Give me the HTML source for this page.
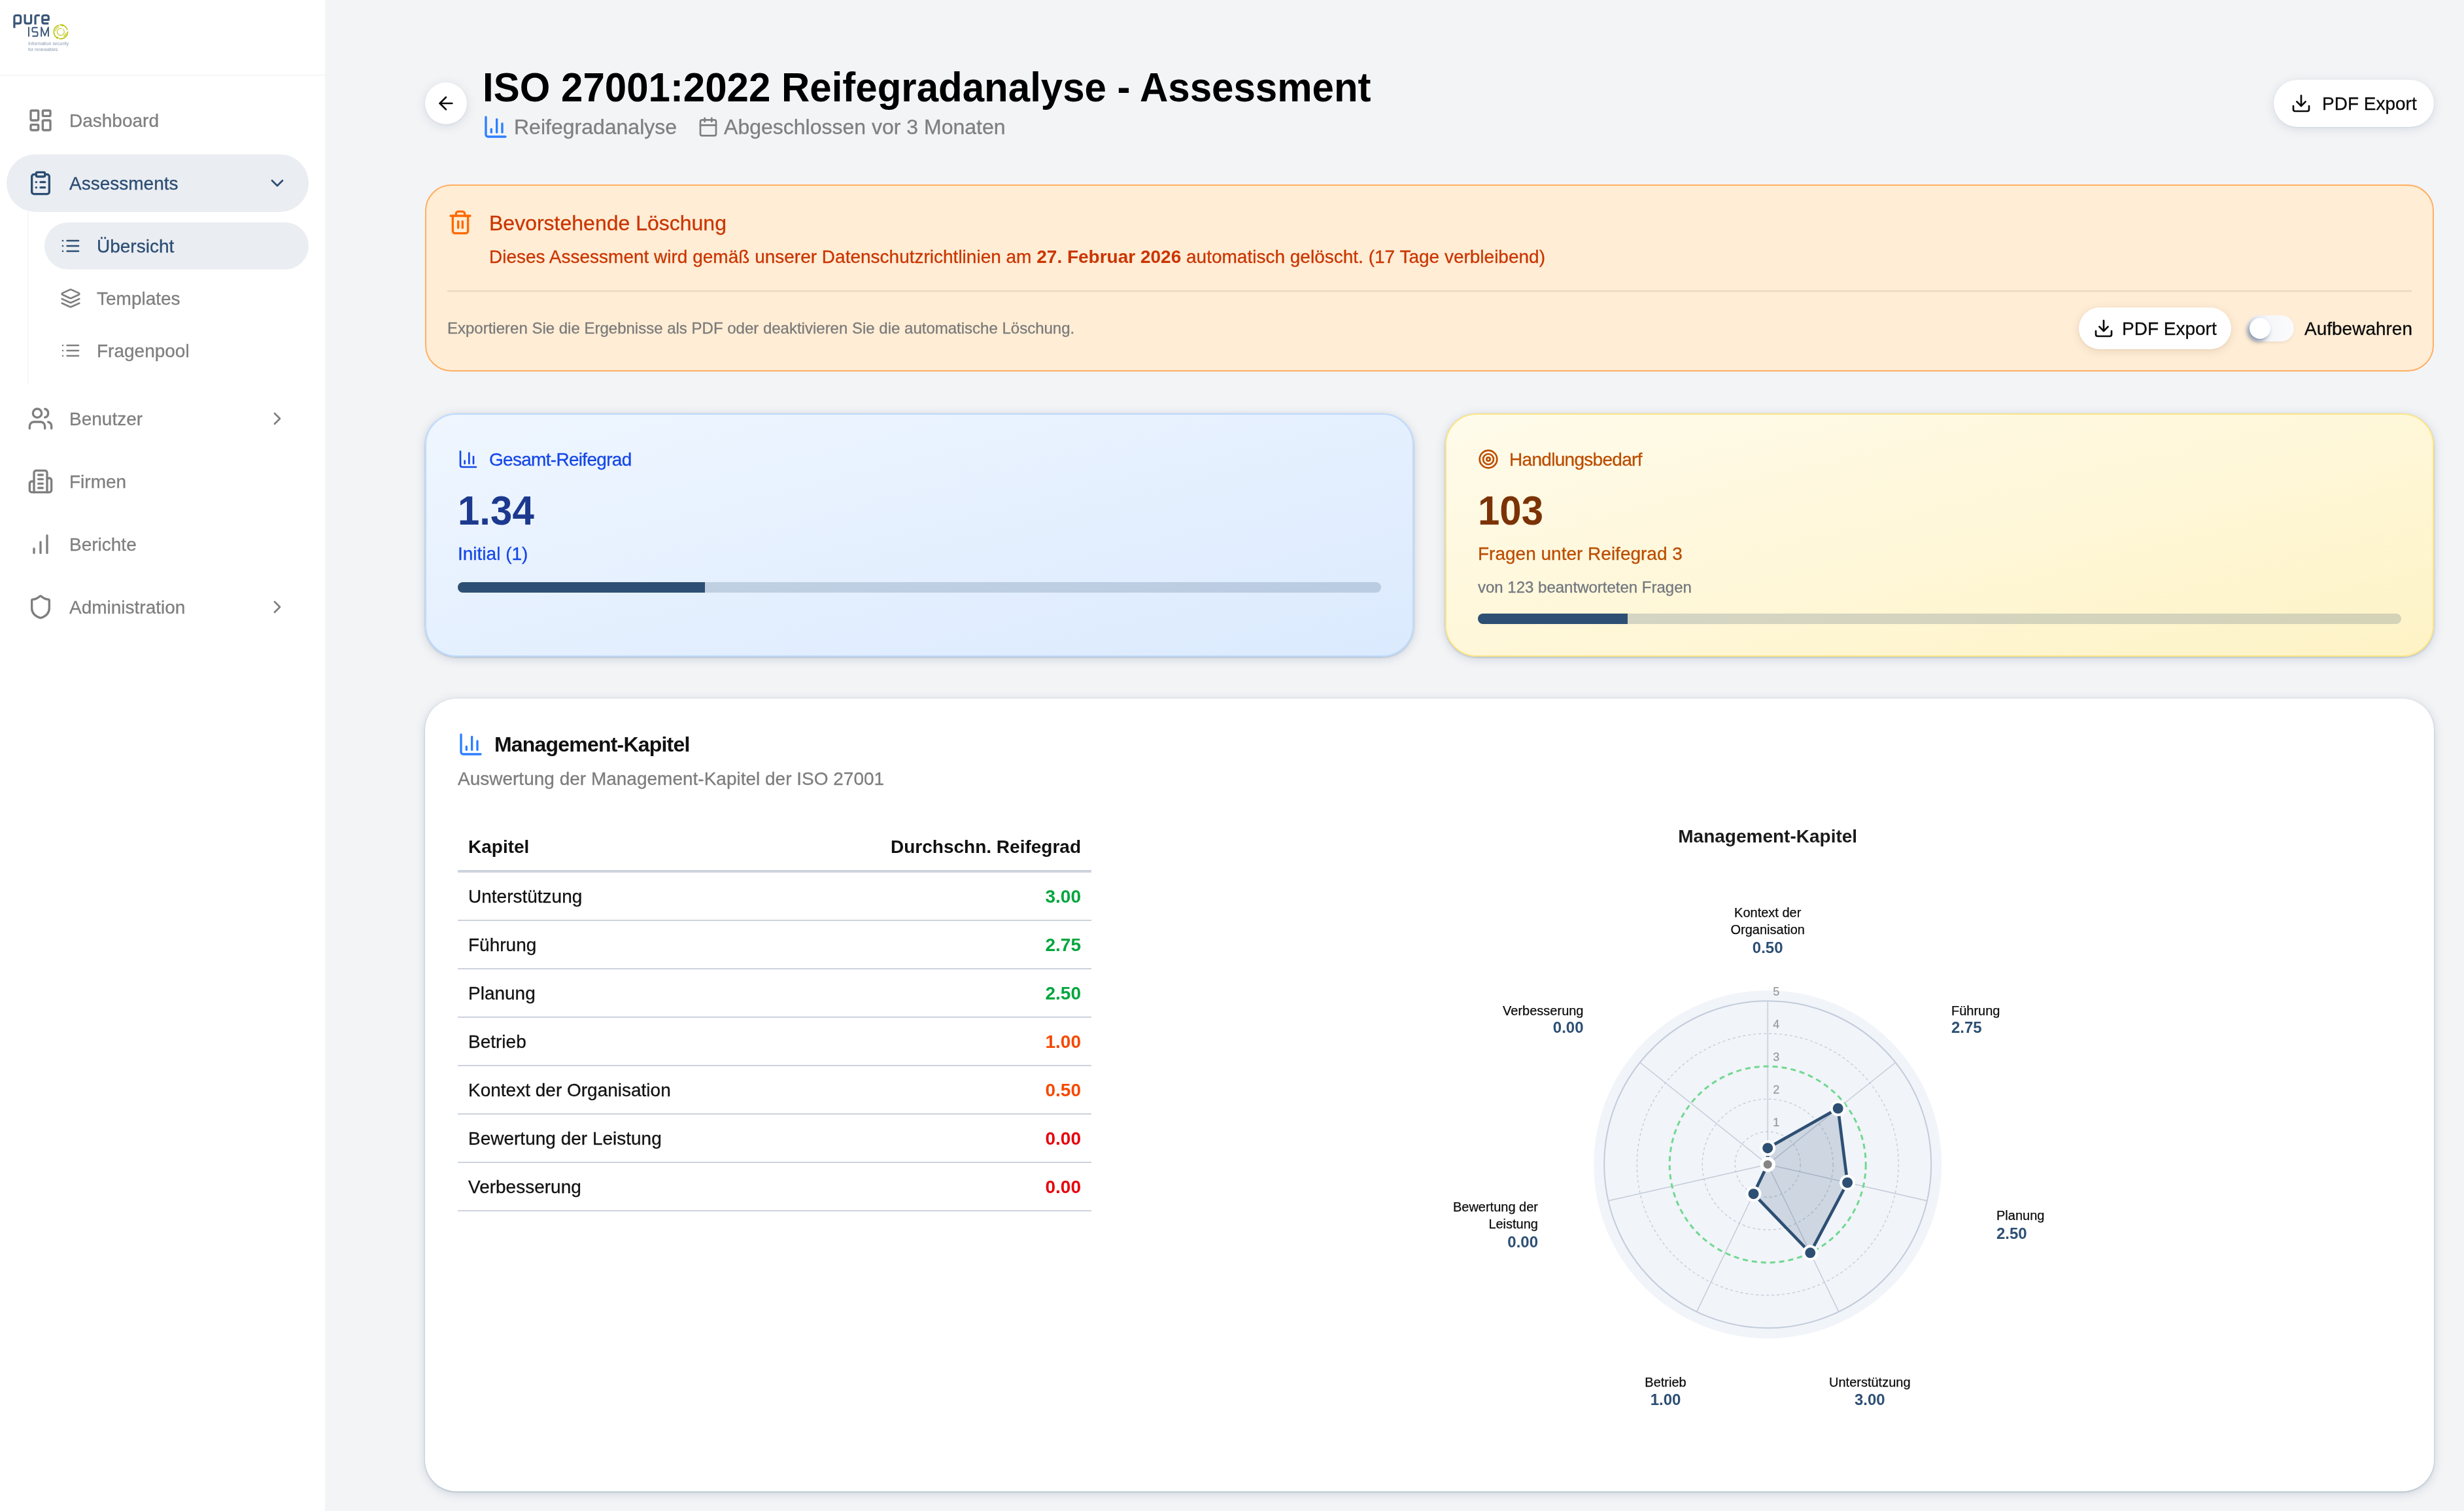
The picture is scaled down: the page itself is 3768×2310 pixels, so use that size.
<!DOCTYPE html>
<html lang="de">
<head>
<meta charset="utf-8">
<title>ISO 27001:2022 Reifegradanalyse - Assessment</title>
<style>
*{box-sizing:border-box;margin:0;padding:0}
html,body{width:3768px;height:2310px;overflow:hidden}
body{-webkit-text-stroke:0.3px;font-family:"Liberation Sans",sans-serif;background:#f3f4f6;color:#0a0a0a;position:relative;-webkit-font-smoothing:antialiased}
#root{position:absolute;left:0;top:0;width:3768px;height:2310px;will-change:transform;transform:translateZ(0)}
svg{display:block;flex:none}
#title,.num,b,#mg .hd,#tb .r.h,#rad text[font-weight]{-webkit-text-stroke:0}
.ic{fill:none;stroke:currentColor;stroke-width:2;stroke-linecap:round;stroke-linejoin:round}

/* ---------- sidebar ---------- */
#sb{position:absolute;left:0;top:0;width:497px;height:2310px;background:#fff}
#sbhead{position:absolute;left:0;top:0;width:497px;height:116px;border-bottom:2px solid #f7f7f8}
#logo{position:absolute;left:0;top:0}
.nav{position:absolute;left:10px;width:462px;height:88px;border-radius:44px;display:flex;align-items:center;padding:0 32px;font-size:28px;line-height:40px;color:#7f7f7f}
.nav span,.sub span,.pill span{position:relative;top:1px}
.nav svg.i40{width:40px;height:40px;margin-right:24px}
.nav .chev{width:32px;height:32px;margin-left:auto}
.nav.act{background:#eaedf1;color:#2b4d74}
.sub{position:absolute;left:68px;width:404px;height:72px;border-radius:36px;display:flex;align-items:center;padding:0 24px;font-size:28px;line-height:40px;color:#7f7f7f}
.sub svg{width:32px;height:32px;margin-right:24px}
.sub.act{background:#eaedf1;color:#2b4d74}
#subline{position:absolute;left:42px;top:324px;width:2px;height:264px;background:#f6f7f8}

/* ---------- main ---------- */
#backbtn{position:absolute;left:650px;top:126px;width:64px;height:64px;border-radius:32px;background:#fff;box-shadow:0 3px 16px rgba(45,79,115,.15),0 1px 3px rgba(45,79,115,.08);display:flex;align-items:center;justify-content:center;color:#0a0a0a}
#backbtn svg{width:32px;height:32px}
#title{transform:scaleY(1.045);transform-origin:0 56px;position:absolute;left:738px;top:99px;font-size:60px;line-height:72px;font-weight:700;color:#000;white-space:nowrap;letter-spacing:0}
#subtitle{position:absolute;left:738px;top:170px;height:48px;display:flex;align-items:center;font-size:32px;line-height:48px;color:#7f7f7f;white-space:nowrap}
.pill{position:absolute;background:#fff;border-radius:999px;display:flex;align-items:center;font-size:28px;line-height:40px;color:#0a0a0a;white-space:nowrap;box-shadow:0 3px 16px rgba(45,79,115,.15),0 1px 3px rgba(45,79,115,.08)}
.pill svg{width:32px;height:32px}

/* ---------- alert ---------- */
#alert{position:absolute;left:650px;top:282px;width:3072px;height:286px;border:2px solid #ffaf62;border-radius:40px;background:#ffedd5}
#alert .trash{position:absolute;left:32px;top:36px;width:40px;height:40px;color:#ff6900}
#alert .t1{position:absolute;left:96px;top:33px;font-size:32px;line-height:48px;color:#ca3500;white-space:nowrap}
#alert .t2{position:absolute;left:96px;top:89px;font-size:28px;line-height:40px;color:#ca3500;white-space:nowrap}
#alert .t2 b{font-weight:700}
#alert .div{position:absolute;left:32px;right:32px;top:160px;height:2px;background:#e9d6c0}
#alert .t3{position:absolute;left:32px;top:202px;font-size:24px;line-height:32px;color:#7a7a7a;white-space:nowrap}
#alert .pill{left:2527px;top:186px;height:64px;padding:0 22px;box-shadow:0 3px 14px rgba(115,79,45,.14),0 1px 3px rgba(115,79,45,.08)}
#tog{position:absolute;left:2784px;top:198px;width:72px;height:40px;border-radius:20px;background:linear-gradient(90deg,#e3e7ee 0%,#f6f7fa 45%,#fbfbfd 100%);box-shadow:0 2px 4px rgba(30,41,59,.08)}
#tog i{position:absolute;left:4px;top:4px;width:32px;height:32px;border-radius:16px;background:#fff;box-shadow:-3px 4px 7px rgba(51,75,110,.55)}
#alert .t4{position:absolute;left:2872px;top:199px;font-size:28px;line-height:40px;color:#0a0a0a;white-space:nowrap}

/* ---------- stat cards ---------- */
.card{position:absolute;top:632px;width:1512px;height:372px;border-radius:48px;border:2px solid;box-shadow:0 3px 16px rgba(45,79,115,.20),0 1px 3px rgba(45,79,115,.30)}
#c1{left:650px;border-color:#bedbff;background:linear-gradient(to bottom right,#eff6ff 0%,#dbeafe 100%)}
#c2{left:2210px;border-color:#fee685;background:linear-gradient(to bottom right,#fffbeb 0%,#fef3c6 100%)}
.card .hd{position:absolute;left:48px;top:48px;height:40px;display:flex;align-items:center;font-size:28px;line-height:40px;white-space:nowrap;letter-spacing:-0.7px}
.card .hd svg{width:32px;height:32px;margin-right:16px}
.card .hd span{position:relative;top:1px}
.card .num{transform:scaleY(1.045);transform-origin:0 56px;position:absolute;left:48px;top:112px;font-size:60px;line-height:72px;font-weight:700;white-space:nowrap}
.card .l1{position:absolute;left:48px;top:193px;font-size:28px;line-height:40px;white-space:nowrap}
.card .l2{position:absolute;left:48px;top:248px;font-size:24px;line-height:32px;color:#72767e;white-space:nowrap}
.bar{position:absolute;left:48px;width:1412px;height:16px;border-radius:8px;background:rgba(45,79,115,.2);overflow:hidden}
.bar i{display:block;height:16px;background:#2d4f73}

/* ---------- management card ---------- */
#mg{position:absolute;left:650px;top:1068px;width:3072px;height:1212px;border-radius:48px;background:#fff;box-shadow:0 3px 16px rgba(45,79,115,.20),0 1px 3px rgba(45,79,115,.30)}
#mg .hd{position:absolute;left:50px;top:50px;height:40px;display:flex;align-items:center;font-size:32px;line-height:40px;font-weight:700;letter-spacing:-0.8px;color:#111;white-space:nowrap}
#mg .hd svg{width:40px;height:40px;margin-right:16px;color:#2b7fff}
#mg .ds{position:absolute;left:50px;top:103px;font-size:28px;line-height:40px;color:#7d7d7d;white-space:nowrap}
#tb{position:absolute;left:50px;top:190px;width:969px;font-size:28px;line-height:40px;color:#111}
#tb .r span,#tb .r b{position:relative;top:1px}
#tb .r{height:74px;border-bottom:2px solid #cdd3dd;display:flex;align-items:center;justify-content:space-between;padding:0 16px;white-space:nowrap}
#tb .r.h{height:76px;border-bottom:4px solid #cdd3dd;font-weight:700}
#tb b{font-weight:700}
.g{color:#00a63e}.o{color:#f54900}.rd{color:#e7000b}
#rad{position:absolute;left:1400px;top:150px}
#rad text{font-family:"Liberation Sans",sans-serif}
</style>
</head>
<body>
<div id="root">

<!-- ================= SIDEBAR ================= -->
<div id="sb">
  <div id="sbhead">
    <svg id="logo" width="130" height="100" viewBox="0 0 130 100">
      <g fill="none" stroke="#3a5679" stroke-width="3.2" stroke-linejoin="round">
        <path d="M21.900 42.800V26.500Q21.900 23.500 24.900 23.500H28.700Q31.700 23.500 31.700 26.500V32.900Q31.700 35.900 28.700 35.900H21.900"/>
        <path d="M38.100 21.900V32.900Q38.100 35.900 41.100 35.900H44.600Q47.600 35.900 47.600 32.900V21.900"/>
        <path d="M54 37.500V26.500Q54 23.500 57 23.500H60.800"/>
        <path d="M74.300 35.900H67.800Q64.800 35.900 64.800 32.900V26.500Q64.800 23.500 67.800 23.500H71.300Q74.300 23.500 74.300 26.500V30.300H64.800"/>
      </g>
      <g fill="none" stroke="#3a5679" stroke-width="1.900" stroke-linejoin="round">
        <path d="M44 41.300V56.100"/>
        <path d="M57.500 42.200H50.900Q49.400 42.200 49.400 43.700V47.200Q49.400 48.700 50.900 48.700H56Q57.500 48.700 57.500 50.200V53.700Q57.500 55.200 56 55.200H49.400"/>
        <path d="M63.200 56.100V41.800L68.550 54.500L73.900 41.800V56.100"/>
      </g>
      <g fill="none" stroke="#bcc414" stroke-linecap="round">
        <circle cx="92.900" cy="48.700" r="10.600" stroke-width="1.700" stroke-dasharray="19 3 24 2.500 14 4"/>
        <path d="M84.800 47.500A8.200 8.200 0 0 1 90 41" stroke-width="1.100"/>
        <path d="M101 50.500A8.200 8.200 0 0 1 97.500 55.500" stroke-width="1.100"/>
        <circle cx="92.900" cy="48.700" r="5.400" stroke-width="1.100" stroke-dasharray="26 3"/>
      </g>
      <circle cx="95.500" cy="38.600" r="1.700" fill="#bcc414"/>
      <circle cx="87.800" cy="57.800" r="1.700" fill="#bcc414"/>
      <g font-family="Liberation Sans, sans-serif" font-size="7.200" fill="#8b9ab0">
        <text x="43" y="69.400" textLength="62" lengthAdjust="spacingAndGlyphs">Information security</text>
        <text x="43" y="78.400" textLength="45.500" lengthAdjust="spacingAndGlyphs">for renewables</text>
      </g>
    </svg>
  </div>

  <div class="nav" style="top:140px">
    <svg class="ic i40" viewBox="0 0 24 24"><rect x="3" y="3" width="7" height="9" rx="1"/><rect x="14" y="3" width="7" height="5" rx="1"/><rect x="14" y="12" width="7" height="9" rx="1"/><rect x="3" y="16" width="7" height="5" rx="1"/></svg>
    <span>Dashboard</span>
  </div>
  <div class="nav act" style="top:236px">
    <svg class="ic i40" viewBox="0 0 24 24"><rect x="8" y="2" width="8" height="4" rx="1" ry="1"/><path d="M16 4h2a2 2 0 0 1 2 2v14a2 2 0 0 1-2 2H6a2 2 0 0 1-2-2V6a2 2 0 0 1 2-2h2"/><path d="M12 11h4"/><path d="M12 16h4"/><path d="M8 11h.01"/><path d="M8 16h.01"/></svg>
    <span>Assessments</span>
    <svg class="ic chev" viewBox="0 0 24 24"><path d="m6 9 6 6 6-6"/></svg>
  </div>
  <div id="subline"></div>
  <div class="sub act" style="top:340px">
    <svg class="ic" viewBox="0 0 24 24"><path d="M3 12h.01"/><path d="M3 18h.01"/><path d="M3 6h.01"/><path d="M8 12h13"/><path d="M8 18h13"/><path d="M8 6h13"/></svg>
    <span>Übersicht</span>
  </div>
  <div class="sub" style="top:420px">
    <svg class="ic" viewBox="0 0 24 24"><path d="m12.83 2.180a2 2 0 0 0-1.660 0L2.600 6.080a1 1 0 0 0 0 1.830l8.580 3.910a2 2 0 0 0 1.660 0l8.580-3.900a1 1 0 0 0 0-1.830Z"/><path d="m22 17.650-9.170 4.160a2 2 0 0 1-1.660 0L2 17.650"/><path d="m22 12.650-9.170 4.160a2 2 0 0 1-1.660 0L2 12.650"/></svg>
    <span>Templates</span>
  </div>
  <div class="sub" style="top:500px">
    <svg class="ic" viewBox="0 0 24 24"><path d="M3 12h.01"/><path d="M3 18h.01"/><path d="M3 6h.01"/><path d="M8 12h13"/><path d="M8 18h13"/><path d="M8 6h13"/></svg>
    <span>Fragenpool</span>
  </div>
  <div class="nav" style="top:596px">
    <svg class="ic i40" viewBox="0 0 24 24"><path d="M16 21v-2a4 4 0 0 0-4-4H6a4 4 0 0 0-4 4v2"/><circle cx="9" cy="7" r="4"/><path d="M22 21v-2a4 4 0 0 0-3-3.870"/><path d="M16 3.130a4 4 0 0 1 0 7.750"/></svg>
    <span>Benutzer</span>
    <svg class="ic chev" viewBox="0 0 24 24"><path d="m9 18 6-6-6-6"/></svg>
  </div>
  <div class="nav" style="top:692px">
    <svg class="ic i40" viewBox="0 0 24 24"><path d="M6 22V4a2 2 0 0 1 2-2h8a2 2 0 0 1 2 2v18Z"/><path d="M6 12H4a2 2 0 0 0-2 2v6a2 2 0 0 0 2 2h2"/><path d="M18 9h2a2 2 0 0 1 2 2v9a2 2 0 0 1-2 2h-2"/><path d="M10 6h4"/><path d="M10 10h4"/><path d="M10 14h4"/><path d="M10 18h4"/></svg>
    <span>Firmen</span>
  </div>
  <div class="nav" style="top:788px">
    <svg class="ic i40" viewBox="0 0 24 24"><line x1="12" x2="12" y1="20" y2="10"/><line x1="18" x2="18" y1="20" y2="4"/><line x1="6" x2="6" y1="20" y2="16"/></svg>
    <span>Berichte</span>
  </div>
  <div class="nav" style="top:884px">
    <svg class="ic i40" viewBox="0 0 24 24"><path d="M20 13c0 5-3.500 7.500-7.660 8.950a1 1 0 0 1-.670-.010C7.500 20.500 4 18 4 13V6a1 1 0 0 1 1-1c2 0 4.500-1.200 6.240-2.720a1.170 1.170 0 0 1 1.520 0C14.510 3.810 17 5 19 5a1 1 0 0 1 1 1z"/></svg>
    <span>Administration</span>
    <svg class="ic chev" viewBox="0 0 24 24"><path d="m9 18 6-6-6-6"/></svg>
  </div>
</div>

<!-- ================= HEADER ================= -->
<div id="backbtn"><svg class="ic" viewBox="0 0 24 24"><path d="m12 19-7-7 7-7"/><path d="M19 12H5"/></svg></div>
<div id="title">ISO 27001:2022 Reifegradanalyse - Assessment</div>
<div id="subtitle">
  <svg class="ic" style="width:40px;height:40px;color:#2b7fff;margin-right:8px" viewBox="0 0 24 24"><path d="M3 3v16a2 2 0 0 0 2 2h16"/><path d="M18 17V9"/><path d="M13 17V5"/><path d="M8 17v-3"/></svg>
  <span>Reifegradanalyse</span>
  <svg class="ic" style="width:32px;height:32px;margin-left:32px;margin-right:8px" viewBox="0 0 24 24"><path d="M8 2v4"/><path d="M16 2v4"/><rect width="18" height="18" x="3" y="4" rx="2"/><path d="M3 10h18"/></svg>
  <span>Abgeschlossen vor 3 Monaten</span>
</div>
<div class="pill" style="left:3477px;top:122px;height:72px;padding:0 26px">
  <svg class="ic" style="margin-right:16px" viewBox="0 0 24 24"><path d="M21 15v4a2 2 0 0 1-2 2H5a2 2 0 0 1-2-2v-4"/><polyline points="7 10 12 15 17 10"/><line x1="12" x2="12" y1="15" y2="3"/></svg>
  <span>PDF Export</span>
</div>

<div id="alert">
  <svg class="ic trash" viewBox="0 0 24 24"><path d="M3 6h18"/><path d="M19 6v14c0 1-1 2-2 2H7c-1 0-2-1-2-2V6"/><path d="M8 6V4c0-1 1-2 2-2h4c1 0 2 1 2 2v2"/><line x1="10" x2="10" y1="11" y2="17"/><line x1="14" x2="14" y1="11" y2="17"/></svg>
  <div class="t1">Bevorstehende Löschung</div>
  <div class="t2">Dieses Assessment wird gemäß unserer Datenschutzrichtlinien am <b>27. Februar 2026</b> automatisch gelöscht. (17 Tage verbleibend)</div>
  <div class="div"></div>
  <div class="t3">Exportieren Sie die Ergebnisse als PDF oder deaktivieren Sie die automatische Löschung.</div>
  <div class="pill">
    <svg class="ic" style="margin-right:12px" viewBox="0 0 24 24"><path d="M21 15v4a2 2 0 0 1-2 2H5a2 2 0 0 1-2-2v-4"/><polyline points="7 10 12 15 17 10"/><line x1="12" x2="12" y1="15" y2="3"/></svg>
    <span>PDF Export</span>
  </div>
  <div id="tog"><i></i></div>
  <div class="t4">Aufbewahren</div>
</div>

<div class="card" id="c1">
  <div class="hd" style="color:#1447e6"><svg class="ic" viewBox="0 0 24 24"><path d="M3 3v16a2 2 0 0 0 2 2h16"/><path d="M18 17V9"/><path d="M13 17V5"/><path d="M8 17v-3"/></svg><span>Gesamt-Reifegrad</span></div>
  <div class="num" style="color:#1c398e">1.34</div>
  <div class="l1" style="color:#1447e6">Initial (1)</div>
  <div class="bar" style="top:256px"><i style="width:378px"></i></div>
</div>
<div class="card" id="c2">
  <div class="hd" style="color:#bb4d00"><svg class="ic" viewBox="0 0 24 24"><circle cx="12" cy="12" r="10"/><circle cx="12" cy="12" r="6"/><circle cx="12" cy="12" r="2"/></svg><span>Handlungsbedarf</span></div>
  <div class="num" style="color:#7b3306">103</div>
  <div class="l1" style="color:#bb4d00">Fragen unter Reifegrad 3</div>
  <div class="l2">von 123 beantworteten Fragen</div>
  <div class="bar" style="top:304px"><i style="width:229px"></i></div>
</div>

<div id="mg">
  <div class="hd"><svg class="ic" viewBox="0 0 24 24"><path d="M3 3v16a2 2 0 0 0 2 2h16"/><path d="M18 17V9"/><path d="M13 17V5"/><path d="M8 17v-3"/></svg><span>Management-Kapitel</span></div>
  <div class="ds">Auswertung der Management-Kapitel der ISO 27001</div>
<div id="tb">
  <div class="r h"><span>Kapitel</span><span>Durchschn. Reifegrad</span></div>
  <div class="r"><span>Unterstützung</span><b class="g">3.00</b></div>
  <div class="r"><span>Führung</span><b class="g">2.75</b></div>
  <div class="r"><span>Planung</span><b class="g">2.50</b></div>
  <div class="r"><span>Betrieb</span><b class="o">1.00</b></div>
  <div class="r"><span>Kontext der Organisation</span><b class="o">0.50</b></div>
  <div class="r"><span>Bewertung der Leistung</span><b class="rd">0.00</b></div>
  <div class="r"><span>Verbesserung</span><b class="rd">0.00</b></div>
</div>
<svg id="rad" width="1300" height="1000" viewBox="0 0 1300 1000">
<circle cx="653.2" cy="562.2" r="266" fill="#f1f4f9"/>
<line x1="653.2" y1="562.2" x2="653.2" y2="312.2" stroke="#ced6e1" stroke-width="2"/>
<line x1="653.2" y1="562.2" x2="848.7" y2="406.3" stroke="#c2cbd8" stroke-width="1.4"/>
<line x1="653.2" y1="562.2" x2="896.9" y2="617.8" stroke="#c2cbd8" stroke-width="1.4"/>
<line x1="653.2" y1="562.2" x2="761.7" y2="787.4" stroke="#c2cbd8" stroke-width="1.4"/>
<line x1="653.2" y1="562.2" x2="544.7" y2="787.4" stroke="#c2cbd8" stroke-width="1.4"/>
<line x1="653.2" y1="562.2" x2="409.5" y2="617.8" stroke="#c2cbd8" stroke-width="1.4"/>
<line x1="653.2" y1="562.2" x2="457.7" y2="406.3" stroke="#c2cbd8" stroke-width="1.4"/>
<circle cx="653.2" cy="562.2" r="50" fill="none" stroke="#bfc8d5" stroke-width="1.2" stroke-dasharray="4 4"/>
<circle cx="653.2" cy="562.2" r="100" fill="none" stroke="#bfc8d5" stroke-width="1.2" stroke-dasharray="4 4"/>
<circle cx="653.2" cy="562.2" r="200" fill="none" stroke="#bfc8d5" stroke-width="1.2" stroke-dasharray="4 4"/>
<circle cx="653.2" cy="562.2" r="250" fill="none" stroke="#c2ccda" stroke-width="2"/>
<circle cx="653.2" cy="562.2" r="150" fill="none" stroke="#72d891" stroke-width="3" stroke-dasharray="8 6"/>
<text x="661.2" y="504.2" font-size="18" fill="#999" stroke="#999" stroke-width=".2">1</text>
<text x="661.2" y="454.2" font-size="18" fill="#999" stroke="#999" stroke-width=".2">2</text>
<text x="661.2" y="404.2" font-size="18" fill="#999" stroke="#999" stroke-width=".2">3</text>
<text x="661.2" y="354.2" font-size="18" fill="#999" stroke="#999" stroke-width=".2">4</text>
<text x="661.2" y="304.2" font-size="18" fill="#999" stroke="#999" stroke-width=".2">5</text>
<polygon points="653.2,537.2 760.7,476.5 775.1,590.0 718.3,697.3 631.5,607.2 653.2,562.2 653.2,562.2" fill="rgba(45,79,115,.18)" stroke="#2d4f73" stroke-width="4.6" stroke-linejoin="round"/>
<circle cx="653.2" cy="537.2" r="10" fill="#2d4f73" stroke="#fff" stroke-width="4"/>
<circle cx="760.7" cy="476.5" r="10" fill="#2d4f73" stroke="#fff" stroke-width="4"/>
<circle cx="775.1" cy="590.0" r="10" fill="#2d4f73" stroke="#fff" stroke-width="4"/>
<circle cx="718.3" cy="697.3" r="10" fill="#2d4f73" stroke="#fff" stroke-width="4"/>
<circle cx="631.5" cy="607.2" r="10" fill="#2d4f73" stroke="#fff" stroke-width="4"/>
<circle cx="653.2" cy="562.2" r="9" fill="#858585" stroke="#fff" stroke-width="5"/>
<circle cx="653.2" cy="562.2" r="9" fill="#858585" stroke="#fff" stroke-width="5"/>
<text x="653.2" y="184.2" font-size="20" fill="#0a0a0a" stroke="#0a0a0a" stroke-width=".25" text-anchor="middle">Kontext der</text>
<text x="653.2" y="210.2" font-size="20" fill="#0a0a0a" stroke="#0a0a0a" stroke-width=".25" text-anchor="middle">Organisation</text>
<text x="653.2" y="239.2" font-size="24" font-weight="700" fill="#2d4f73" text-anchor="middle">0.50</text>
<text x="934.0" y="333.6" font-size="20" fill="#0a0a0a" stroke="#0a0a0a" stroke-width=".25" text-anchor="start">Führung</text>
<text x="934.0" y="361.0" font-size="24" font-weight="700" fill="#2d4f73" text-anchor="start">2.75</text>
<text x="1003.0" y="647.0" font-size="20" fill="#0a0a0a" stroke="#0a0a0a" stroke-width=".25" text-anchor="start">Planung</text>
<text x="1003.0" y="676.0" font-size="24" font-weight="700" fill="#2d4f73" text-anchor="start">2.50</text>
<text x="809.3" y="901.8" font-size="20" fill="#0a0a0a" stroke="#0a0a0a" stroke-width=".25" text-anchor="middle">Unterstützung</text>
<text x="809.3" y="930.2" font-size="24" font-weight="700" fill="#2d4f73" text-anchor="middle">3.00</text>
<text x="497.0" y="901.8" font-size="20" fill="#0a0a0a" stroke="#0a0a0a" stroke-width=".25" text-anchor="middle">Betrieb</text>
<text x="497.0" y="930.2" font-size="24" font-weight="700" fill="#2d4f73" text-anchor="middle">1.00</text>
<text x="302.0" y="634.0" font-size="20" fill="#0a0a0a" stroke="#0a0a0a" stroke-width=".25" text-anchor="end">Bewertung der</text>
<text x="302.0" y="660.0" font-size="20" fill="#0a0a0a" stroke="#0a0a0a" stroke-width=".25" text-anchor="end">Leistung</text>
<text x="302.0" y="688.7" font-size="24" font-weight="700" fill="#2d4f73" text-anchor="end">0.00</text>
<text x="371.5" y="333.6" font-size="20" fill="#0a0a0a" stroke="#0a0a0a" stroke-width=".25" text-anchor="end">Verbesserung</text>
<text x="371.5" y="361.0" font-size="24" font-weight="700" fill="#2d4f73" text-anchor="end">0.00</text>
<text x="653.2" y="70.0" font-size="28" font-weight="700" fill="#1a1a1a" text-anchor="middle">Management-Kapitel</text>
</svg>
</div>


</div>
</body>
</html>
